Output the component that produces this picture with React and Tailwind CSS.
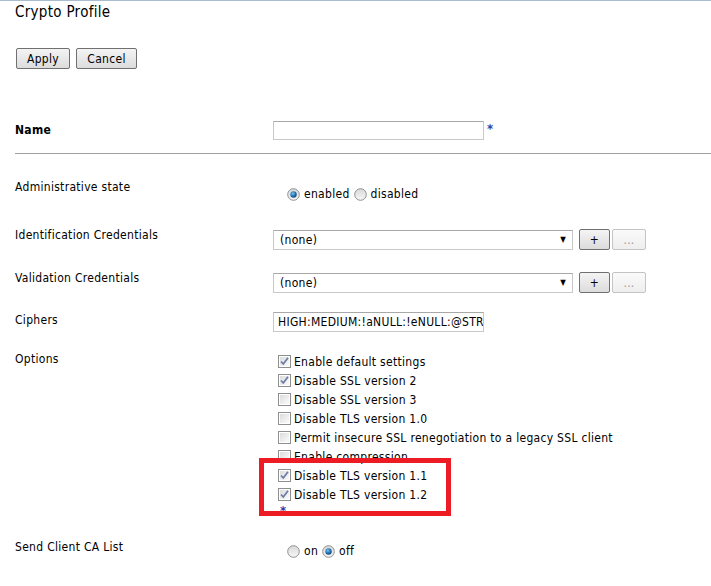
const font = {
  fontFamily: '"DejaVu Sans Condensed", "DejaVu Sans", Verdana, sans-serif',
  letterSpacing: "0.3px",
};

function Radio({ checked }) {
  return (
    <svg width="13" height="13" viewBox="0 0 13 13" className="shrink-0">
      <defs>
        <linearGradient id="rb" x1="0" y1="0" x2="0" y2="1">
          <stop offset="0" stopColor="#d8d8d8" />
          <stop offset="1" stopColor="#f8f8f8" />
        </linearGradient>
        <radialGradient id="rd" cx="0.4" cy="0.35" r="0.7">
          <stop offset="0" stopColor="#7cc4f0" />
          <stop offset="0.6" stopColor="#1f6fae" />
          <stop offset="1" stopColor="#0d3f70" />
        </radialGradient>
      </defs>
      <circle cx="6.5" cy="6.5" r="5.8" fill="url(#rb)" stroke="#8e8f8f" strokeWidth="1" />
      {checked && <circle cx="6.5" cy="6.5" r="3.2" fill="url(#rd)" />}
    </svg>
  );
}

function Check({ checked }) {
  return (
    <svg width="13" height="13" viewBox="0 0 13 13" className="shrink-0">
      <defs>
        <linearGradient id="cb" x1="0" y1="0" x2="1" y2="1">
          <stop offset="0" stopColor="#dcdcdc" />
          <stop offset="1" stopColor="#fbfbfb" />
        </linearGradient>
      </defs>
      <rect x="0.5" y="0.5" width="12" height="12" fill="#fff" stroke="#8e8f8f" />
      <rect x="2" y="2" width="9" height="9" fill="url(#cb)" />
      {checked && (
        <path d="M3 6.5 L5.3 9 L10 2.8" fill="none" stroke="#6a7aa6" strokeWidth="1.7" />
      )}
    </svg>
  );
}

function Btn({ children, w, disabled, className = "" }) {
  return (
    <button
      className={
        "h-[21px] rounded-[2px] border text-[12px] leading-none bg-gradient-to-b " +
        (disabled
          ? "border-[#c4c4c4] from-[#fafafa] to-[#eeeeee] text-[#9a9a9a] "
          : "border-[#707070] from-[#f4f4f4] to-[#dcdcdc] text-black ") +
        className
      }
      style={{ width: w, ...font }}
    >
      {children}
    </button>
  );
}

function Select({ value }) {
  return (
    <div className="flex h-[20px] w-[300px] items-center justify-between border border-[#c9c9c9] border-t-[#a8a8a8] bg-white pl-[6px] pr-[6px] text-[12px]">
      <span>{value}</span>
      <span className="text-[8px] leading-none">▼</span>
    </div>
  );
}

function Star({ className = "" }) {
  return <span className={"text-[13px] font-bold leading-none text-[#2b3ea8] " + className}>*</span>;
}

function CredRow({ label, className }) {
  return (
    <div className={"flex " + className}>
      <div className="w-[258px] leading-[14px]">{label}</div>
      <div className="mt-[1px] flex items-center">
        <Select value="(none)" />
        <Btn w={31} className="ml-[6px]">+</Btn>
        <Btn w={34} disabled className="ml-[2px]">...</Btn>
      </div>
    </div>
  );
}

const options = [
  ["Enable default settings", true],
  ["Disable SSL version 2", true],
  ["Disable SSL version 3", false],
  ["Disable TLS version 1.0", false],
  ["Permit insecure SSL renegotiation to a legacy SSL client", false],
  ["Enable compression", false],
  ["Disable TLS version 1.1", true],
  ["Disable TLS version 1.2", true],
];

export default function App() {
  return (
    <div className="relative h-[586px] w-[711px] overflow-hidden bg-white text-[12px] text-black" style={font}>
      <div className="h-px bg-[#a9bcd0]" />
      <div className="pl-[15px]">
        <h1 className="pt-[2px] text-[15px] leading-[18px]">Crypto Profile</h1>
        <div className="mt-[27px] flex gap-[6px] pl-[1px]">
          <Btn w={54}>Apply</Btn>
          <Btn w={61}>Cancel</Btn>
        </div>

        <div className="mt-[50px] flex h-[22px] items-center">
          <div className="w-[258px] font-bold">Name</div>
          <div className="flex items-start gap-[3px]">
            <div className="h-[19px] w-[211px] border border-[#c9c9c9] border-t-[#a8a8a8]" />
            <Star className="mt-[1px]" />
          </div>
        </div>

        <div className="mt-[12px] h-px bg-[#a0a0a0]" />

        <div className="mt-[26px] flex">
          <div className="w-[272px] leading-[14px]">Administrative state</div>
          <div className="mt-[8px] flex items-center gap-[4px] leading-[13px]">
            <Radio checked />
            <span>enabled</span>
            <Radio />
            <span>disabled</span>
          </div>
        </div>

        <CredRow label="Identification Credentials" className="mt-[27px]" />
        <CredRow label="Validation Credentials" className="mt-[21px]" />

        <div className="mt-[19px] flex">
          <div className="mt-[1px] w-[258px] leading-[14px]">Ciphers</div>
          <input
            readOnly
            value="HIGH:MEDIUM:!aNULL:!eNULL:@STRENGTH"
            className="h-[20px] w-[211px] border border-[#c9c9c9] border-t-[#a8a8a8] pl-[4px] text-[12px] outline-none"
            style={font}
          />
        </div>

        <div className="mt-[20px] flex">
          <div className="w-[263px] leading-[14px]">Options</div>
          <div className="flex flex-col">
            {options.map(([label, on]) => (
              <div key={label} className="flex h-[19px] items-center gap-[3px] whitespace-nowrap">
                <Check checked={on} />
                <span>{label}</span>
              </div>
            ))}
            <Star className="ml-[2px]" />
          </div>
        </div>

        <div className="mt-[23px] flex">
          <div className="w-[272px] leading-[14px]">Send Client CA List</div>
          <div className="mt-[5px] flex items-center gap-[4px] leading-[13px]">
            <Radio />
            <span>on</span>
            <Radio checked />
            <span>off</span>
          </div>
        </div>
      </div>

      <div className="absolute left-[259px] top-[458px] h-[58px] w-[192px] border-[5px] border-[#ed1c24]" />
    </div>
  );
}
